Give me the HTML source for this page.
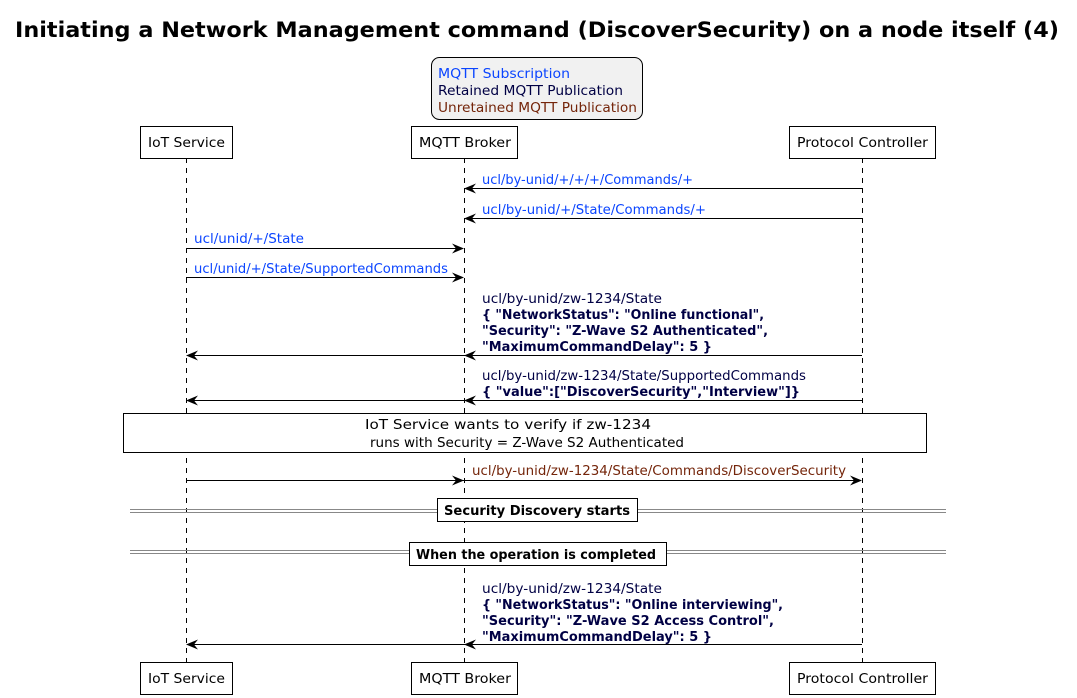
<!DOCTYPE html>
<html><head><meta charset="utf-8"><style>
html,body{margin:0;padding:0;background:#fff;width:1077px;height:698px;overflow:hidden}
svg{display:block}
text{font-family:"DejaVu Sans","Liberation Sans",sans-serif;font-size:13px}
.b{font-weight:bold}
.bl{fill:#0b45ff}.nv{fill:#000044}.br{fill:#74250a}
</style></head><body>
<svg width="1077" height="698" viewBox="0 0 1077 698" xmlns="http://www.w3.org/2000/svg">
<text x="15" y="37" class="b" style="font-size:21px" textLength="1044" lengthAdjust="spacingAndGlyphs">Initiating a Network Management command (DiscoverSecurity) on a node itself (4)</text>
<rect x="431.5" y="57.5" width="211" height="62" rx="8" fill="#f1f1f1" stroke="#000"/>
<text x="438" y="78" class="bl" textLength="132" lengthAdjust="spacingAndGlyphs">MQTT Subscription</text>
<text x="438" y="95" class="nv" textLength="185" lengthAdjust="spacingAndGlyphs">Retained MQTT Publication</text>
<text x="438" y="112" class="br" textLength="199" lengthAdjust="spacingAndGlyphs">Unretained MQTT Publication</text>
<g stroke="#000" stroke-dasharray="5,5">
<line x1="186.5" y1="158" x2="186.5" y2="662"/>
<line x1="464.5" y1="158" x2="464.5" y2="662"/>
<line x1="862.5" y1="158" x2="862.5" y2="662"/>
</g>
<g fill="#fff" stroke="#000">
<rect x="140.5" y="126.5" width="92" height="32"/>
<rect x="411.5" y="126.5" width="106" height="32"/>
<rect x="789.5" y="126.5" width="146" height="32"/>
<rect x="140.5" y="662.5" width="92" height="32"/>
<rect x="411.5" y="662.5" width="106" height="32"/>
<rect x="789.5" y="662.5" width="146" height="32"/>
</g>
<g>
<text x="148" y="147" textLength="77" lengthAdjust="spacingAndGlyphs">IoT Service</text><text x="419" y="147" textLength="92" lengthAdjust="spacingAndGlyphs">MQTT Broker</text><text x="797" y="147" textLength="131" lengthAdjust="spacingAndGlyphs">Protocol Controller</text>
<text x="148" y="683" textLength="77" lengthAdjust="spacingAndGlyphs">IoT Service</text><text x="419" y="683" textLength="92" lengthAdjust="spacingAndGlyphs">MQTT Broker</text><text x="797" y="683" textLength="131" lengthAdjust="spacingAndGlyphs">Protocol Controller</text>
</g>
<defs>
<path id="hl" d="M0,0 L12,-5 L8,0 L12,5 Z"/>
<path id="hr" d="M0,0 L-12,-5 L-8,0 L-12,5 Z"/>
</defs>
<g stroke="#000" fill="none">
<line x1="466" y1="188.5" x2="862" y2="188.5"/>
<line x1="466" y1="218.5" x2="862" y2="218.5"/>
<line x1="186" y1="248.5" x2="462" y2="248.5"/>
<line x1="186" y1="277.5" x2="462" y2="277.5"/>
<line x1="188" y1="355.5" x2="862" y2="355.5"/>
<line x1="188" y1="400.5" x2="862" y2="400.5"/>
<line x1="186" y1="480.5" x2="860" y2="480.5"/>
<line x1="188" y1="644.5" x2="862" y2="644.5"/>
</g>
<g fill="#000">
<use href="#hl" x="464" y="188.5"/><use href="#hl" x="464" y="218.5"/>
<use href="#hr" x="464" y="248.5"/><use href="#hr" x="464" y="277.5"/>
<use href="#hl" x="464" y="355.5"/><use href="#hl" x="186" y="355.5"/>
<use href="#hl" x="464" y="400.5"/><use href="#hl" x="186" y="400.5"/>
<use href="#hr" x="464" y="480.5"/><use href="#hr" x="862" y="480.5"/>
<use href="#hl" x="464" y="644.5"/><use href="#hl" x="186" y="644.5"/>
</g>
<text x="482" y="184" class="bl" textLength="211" lengthAdjust="spacingAndGlyphs">ucl/by-unid/+/+/+/Commands/+</text>
<text x="482" y="214" class="bl" textLength="224" lengthAdjust="spacingAndGlyphs">ucl/by-unid/+/State/Commands/+</text>
<text x="194" y="243" class="bl" textLength="110" lengthAdjust="spacingAndGlyphs">ucl/unid/+/State</text>
<text x="194" y="273" class="bl" textLength="254" lengthAdjust="spacingAndGlyphs">ucl/unid/+/State/SupportedCommands</text>
<text x="482" y="303" class="nv" textLength="180" lengthAdjust="spacingAndGlyphs">ucl/by-unid/zw-1234/State</text>
<text x="482" y="319" class="nv b" textLength="282" lengthAdjust="spacingAndGlyphs">{ "NetworkStatus": "Online functional",</text>
<text x="482" y="335" class="nv b" textLength="286" lengthAdjust="spacingAndGlyphs">"Security": "Z-Wave S2 Authenticated",</text>
<text x="482" y="351" class="nv b" textLength="230" lengthAdjust="spacingAndGlyphs">"MaximumCommandDelay": 5 }</text>
<text x="482" y="380" class="nv" textLength="324" lengthAdjust="spacingAndGlyphs">ucl/by-unid/zw-1234/State/SupportedCommands</text>
<text x="482" y="396" class="nv b" textLength="318" lengthAdjust="spacingAndGlyphs">{ "value":["DiscoverSecurity","Interview"]}</text>
<rect x="123.5" y="413.5" width="803" height="39" fill="#fff" stroke="#000"/>
<text x="365" y="429" style="font-size:13px" textLength="286" lengthAdjust="spacingAndGlyphs">IoT Service wants to verify if zw-1234</text>
<text x="370" y="447" style="font-size:13px" textLength="314" lengthAdjust="spacingAndGlyphs">runs with Security = Z-Wave S2 Authenticated</text>
<text x="472" y="475" class="br" textLength="374" lengthAdjust="spacingAndGlyphs">ucl/by-unid/zw-1234/State/Commands/DiscoverSecurity</text>
<g stroke="#888" stroke-width="1">
<line x1="130" y1="509.5" x2="946" y2="509.5"/><line x1="130" y1="512.5" x2="946" y2="512.5"/>
<line x1="130" y1="550.5" x2="946" y2="550.5"/><line x1="130" y1="553.5" x2="946" y2="553.5"/>
</g>
<rect x="437.5" y="498.5" width="200" height="23" fill="#fff" stroke="#000"/>
<text x="444" y="515" class="b" textLength="186" lengthAdjust="spacingAndGlyphs">Security Discovery starts</text>
<rect x="409.5" y="542.5" width="257" height="23" fill="#fff" stroke="#000"/>
<text x="416" y="559" class="b" textLength="240" lengthAdjust="spacingAndGlyphs">When the operation is completed</text>
<text x="482" y="593" class="nv" textLength="180" lengthAdjust="spacingAndGlyphs">ucl/by-unid/zw-1234/State</text>
<text x="482" y="609" class="nv b" textLength="301" lengthAdjust="spacingAndGlyphs">{ "NetworkStatus": "Online interviewing",</text>
<text x="482" y="625" class="nv b" textLength="292" lengthAdjust="spacingAndGlyphs">"Security": "Z-Wave S2 Access Control",</text>
<text x="482" y="641" class="nv b" textLength="230" lengthAdjust="spacingAndGlyphs">"MaximumCommandDelay": 5 }</text>
</svg>
</body></html>
